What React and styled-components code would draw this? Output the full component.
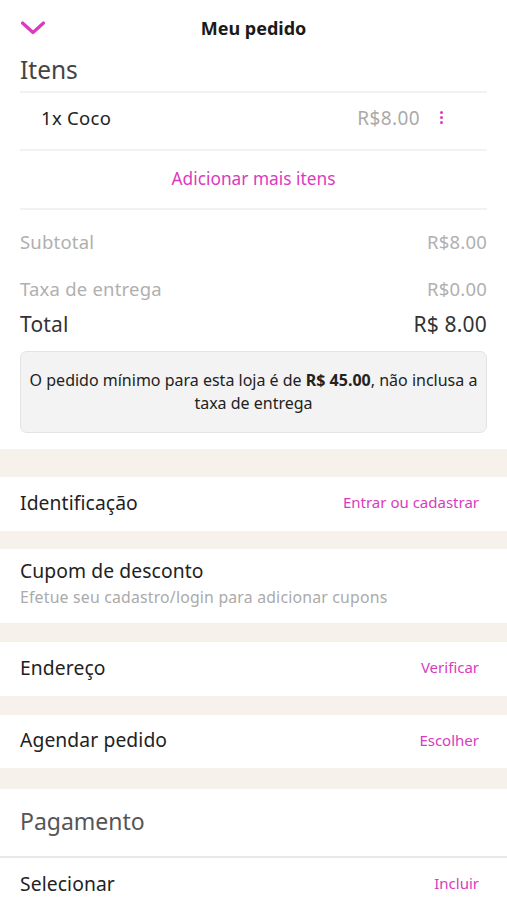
import React from 'react';
import styled, { createGlobalStyle } from 'styled-components';

const pink = '#da3bbd';
const band = '#f7f1ec';

const GlobalStyle = createGlobalStyle`
  body {
    margin: 0;
    background: #fff;
    font-family: 'Noto Sans', 'Lato', sans-serif;
    color: #222;
  }
`;

const Page = styled.div`
  width: 507px;
  background: #fff;
`;

const Header = styled.header`
  display: flex;
  align-items: center;
  justify-content: center;
  position: relative;
  height: 56px;
`;

const BackButton = styled.div`
  position: absolute;
  left: 20px;
  top: 19px;
  width: 26px;
  height: 16px;
  color: ${pink};
`;

const Title = styled.h1`
  margin: 0;
  font-size: 18px;
  font-weight: 700;
  color: #1a1a1a;
`;

const Section = styled.section`
  padding: 0 20px;
`;

const SectionTitle = styled.h2`
  margin: 0;
  font-size: 24.5px;
  font-weight: 400;
  color: #444;
  height: 35px;
  line-height: 28px;
`;

const Divider = styled.div`
  height: 2px;
  background: #f2f2f2;
`;

const ItemRow = styled.div`
  display: flex;
  align-items: center;
  height: 56px;
  padding: 0 25px 7px 21px;
  box-sizing: border-box;
`;

const ItemName = styled.span`
  flex: 1;
  font-size: 18.5px;
  letter-spacing: 0.3px;
  color: #222;
`;

const ItemPrice = styled.span`
  font-size: 19px;
  letter-spacing: 0.4px;
  color: #aaa;
`;

const MoreDots = styled.div`
  width: 42px;
  display: flex;
  flex-direction: column;
  align-items: center;
  gap: 2px;
  span {
    width: 3px;
    height: 3px;
    border-radius: 50%;
    background: ${pink};
  }
`;

const AddMore = styled.div`
  height: 57px;
  display: flex;
  align-items: center;
  justify-content: center;
  padding-bottom: 3px;
  box-sizing: border-box;
  font-size: 17.3px;
  color: ${pink};
`;

const SummaryRow = styled.div`
  display: flex;
  justify-content: space-between;
  align-items: center;
  height: ${p => p.$h || 47}px;
  font-size: ${p => (p.$total ? 21 : 18.5)}px;
  letter-spacing: 0.2px;
  color: ${p => (p.$total ? '#333' : '#b0b0b0')};
`;

const Notice = styled.div`
  margin: 7px 0 16px;
  padding: 17px 4px;
  background: #f3f3f3;
  border: 1px solid #e3e3e3;
  border-radius: 7px;
  text-align: center;
  font-size: 16px;
  line-height: 23px;
  color: #222;
  b {
    font-weight: 700;
  }
`;

const Band = styled.div`
  height: ${p => p.$h}px;
  background: ${band};
`;

const ActionRow = styled.div`
  display: flex;
  align-items: center;
  justify-content: space-between;
  height: ${p => p.$h || 54}px;
  padding: 0 28px 4px 20px;
  box-sizing: border-box;
`;

const RowLabel = styled.span`
  font-size: 19.3px;
  letter-spacing: 0.1px;
  color: #222;
`;

const RowAction = styled.span`
  font-size: 15px;
  color: ${pink};
`;

const CouponBlock = styled.div`
  height: 74px;
  padding: 8px 20px 0;
  box-sizing: border-box;
`;

const Hint = styled.div`
  margin-top: 2px;
  font-size: 15.8px;
  letter-spacing: 0.2px;
  color: #aaa;
`;

const PaymentTitle = styled.div`
  height: 67px;
  display: flex;
  align-items: center;
  padding: 0 20px 4px;
  box-sizing: border-box;
  font-size: 23px;
  color: #555;
`;

const FullDivider = styled.div`
  height: 2px;
  background: #e8e8e8;
`;

const Chevron = () => (
  <svg width="26" height="16" viewBox="0 0 26 16" fill="none">
    <path d="M2.5 3 L13 12.5 L23.5 3" stroke="currentColor" strokeWidth="3.2" strokeLinecap="round" strokeLinejoin="round" />
  </svg>
);

const Action = ({ label, action, h }) => (
  <ActionRow $h={h}>
    <RowLabel>{label}</RowLabel>
    <RowAction>{action}</RowAction>
  </ActionRow>
);

export default function App() {
  return (
    <Page>
      <GlobalStyle />
      <Header>
        <BackButton><Chevron /></BackButton>
        <Title>Meu pedido</Title>
      </Header>

      <Section>
        <SectionTitle>Itens</SectionTitle>
        <Divider />
        <ItemRow>
          <ItemName>1x Coco</ItemName>
          <ItemPrice>R$8.00</ItemPrice>
          <MoreDots><span /><span /><span /></MoreDots>
        </ItemRow>
        <Divider />
        <AddMore>Adicionar mais itens</AddMore>
        <Divider />
        <SummaryRow $h={62}>
          <span>Subtotal</span>
          <span>R$8.00</span>
        </SummaryRow>
        <SummaryRow $h={32}>
          <span>Taxa de entrega</span>
          <span>R$0.00</span>
        </SummaryRow>
        <SummaryRow $total $h={40}>
          <span>Total</span>
          <span>R$ 8.00</span>
        </SummaryRow>
        <Notice>
          O pedido mínimo para esta loja é de <b>R$ 45.00</b>, não inclusa a taxa de entrega
        </Notice>
      </Section>

      <Band $h={28} />
      <Action label="Identificação" action="Entrar ou cadastrar" />
      <Band $h={18} />
      <CouponBlock>
        <RowLabel>Cupom de desconto</RowLabel>
        <Hint>Efetue seu cadastro/login para adicionar cupons</Hint>
      </CouponBlock>
      <Band $h={19} />
      <Action label="Endereço" action="Verificar" />
      <Band $h={19} />
      <Action label="Agendar pedido" action="Escolher" h={53} />
      <Band $h={21} />
      <PaymentTitle>Pagamento</PaymentTitle>
      <FullDivider />
      <Action label="Selecionar" action="Incluir" />
    </Page>
  );
}
